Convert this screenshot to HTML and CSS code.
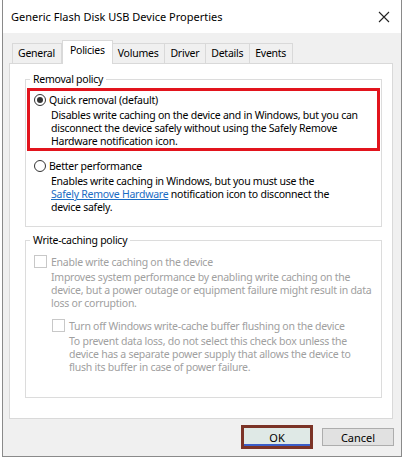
FILE: index.html
```html
<!DOCTYPE html>
<html lang="en">
<head>
  <meta charset="UTF-8">
  <title>Generic Flash Disk USB Device Properties</title>
  <link rel="stylesheet" href="styles.css">
</head>
<body>
  <div class="window">
    <div class="titlebar">
      <span class="title">Generic Flash Disk USB Device Properties</span>
      <svg class="close" width="12" height="12" viewBox="0 0 12 12">
        <path d="M1 1 L11 11 M11 1 L1 11" stroke="#222" stroke-width="1.1" fill="none"/>
      </svg>
    </div>

    <div class="content">
      <div class="tabs">
        <div class="tab">General</div>
        <div class="tab active">Policies</div>
        <div class="tab">Volumes</div>
        <div class="tab">Driver</div>
        <div class="tab">Details</div>
        <div class="tab">Events</div>
      </div>

      <div class="panel">
        <div class="group removal-group">
          <span class="group-title">Removal policy</span>

          <div class="option highlight">
            <div class="option-row">
              <span class="radio checked"></span>
              <span>Quick removal (default)</span>
            </div>
            <p class="desc">Disables write caching on the device and in Windows, but you can<br>disconnect the device safely without using the Safely Remove<br>Hardware notification icon.</p>
          </div>

          <div class="option next-option">
            <div class="option-row">
              <span class="radio"></span>
              <span>Better performance</span>
            </div>
            <p class="desc">Enables write caching in Windows, but you must use the<br><a href="#">Safely Remove Hardware</a> notification icon to disconnect the<br>device safely.</p>
          </div>
        </div>

        <div class="group cache-group">
          <span class="group-title">Write-caching policy</span>

          <div class="option">
            <div class="option-row">
              <span class="check"></span>
              <span>Enable write caching on the device</span>
            </div>
            <p class="desc">Improves system performance by enabling write caching on the<br>device, but a power outage or equipment failure might result in data<br>loss or corruption.</p>
          </div>

          <div class="option sub">
            <div class="option-row">
              <span class="check"></span>
              <span>Turn off Windows write-cache buffer flushing on the device</span>
            </div>
            <p class="desc">To prevent data loss, do not select this check box unless the<br>device has a separate power supply that allows the device to<br>flush its buffer in case of power failure.</p>
          </div>
        </div>
      </div>

      <div class="buttons">
        <button class="btn ok">OK</button>
        <button class="btn">Cancel</button>
      </div>
    </div>
  </div>
</body>
</html>
```

FILE: styles.css
```css
* {
  box-sizing: border-box;
}

body {
  margin: 0;
  background-color: #fff;
  font-family: 'Noto Sans', 'Liberation Sans', sans-serif;
  font-size: 10.5px;
  letter-spacing: -0.25px;
  color: #000;
}

.window {
  margin: 0 2px;
  width: 400px;
  height: 457px;
  border: 1px solid #8a8a8a;
  border-top: none;
  background-color: #f0f0f0;
}

.titlebar {
  height: 33px;
  background-color: #fff;
  display: flex;
  align-items: center;
  justify-content: space-between;
  padding: 0 11px 0 8px;
}

.title {
  font-size: 11px;
  letter-spacing: 0;
}

.content {
  padding: 7px 8px 0 6px;
}

/* tabs */
.tabs {
  display: flex;
  align-items: flex-end;
  height: 23px;
  padding-left: 3px;
}

.tab {
  height: 20px;
  padding: 0 6px 0 5px;
  border: 1px solid #d9d9d9;
  border-bottom: none;
  border-left: none;
  background-color: #f0f0f0;
  line-height: 19px;
}

.tab:first-child {
  border-left: 1px solid #d9d9d9;
}

.tab.active {
  height: 24px;
  padding: 0 7px;
  background-color: #fff;
  border-left: 1px solid #d9d9d9;
  margin-bottom: -1px;
  position: relative;
  z-index: 1;
}

.panel {
  display: flex;
  flex-direction: column;
  background-color: #fff;
  border: 1px solid #d9d9d9;
  height: 356px;
  padding: 15px 10px 20px 15px;
}

/* group boxes */
.group {
  position: relative;
  border: 1px solid #dcdcdc;
}

.group-title {
  position: absolute;
  top: -7px;
  left: 4px;
  padding: 0 3px;
  line-height: 13px;
  background-color: #fff;
  color: #000;
}

.removal-group {
  padding: 7px 0 9px;
}

.cache-group {
  flex: 1;
  margin-top: 13px;
  padding: 9px 0 0;
}

.option {
  padding: 1px 0 0 4px;
  border: 3px solid transparent;
  margin: 0 1px;
}

.option.highlight {
  margin-top: 1px;
  border-color: #e2141d;
}

.next-option {
  margin-top: 3px;
}

.option-row {
  display: flex;
  align-items: center;
  gap: 3px;
  height: 15px;
  white-space: nowrap;
}

.radio {
  width: 12px;
  height: 12px;
  border: 1px solid #333;
  border-radius: 50%;
  display: flex;
  align-items: center;
  justify-content: center;
}

.radio.checked::after {
  content: "";
  width: 6px;
  height: 6px;
  border-radius: 50%;
  background-color: #333;
}

.check {
  width: 13px;
  height: 13px;
  border: 1px solid #c8c8c8;
  margin-right: 1px;
}

.desc {
  margin: 2px 0 0 17px;
  line-height: 13px;
  white-space: nowrap;
}

.desc a {
  color: #1a6cc4;
}

.cache-group .option {
  color: #a0a0a0;
}

.cache-group .sub {
  margin-top: 1px;
  margin-left: 19px;
}

/* buttons */
.buttons {
  display: flex;
  justify-content: flex-end;
  align-items: flex-start;
  gap: 9px;
  padding-top: 6px;
  margin-right: -1px;
}

.btn {
  width: 72px;
  height: 18px;
  margin-top: 3px;
  font-family: inherit;
  font-size: 11px;
  letter-spacing: 0;
  color: #000;
  background-color: #e1e1e1;
  border: 1px solid #adadad;
  padding: 0;
}

.btn.ok {
  height: 24px;
  margin-top: 0;
  border: 3px solid #7c3327;
  box-shadow: inset 0 -2px 0 #3c5ec8;
  background-color: #dfe9e6;
}
```
